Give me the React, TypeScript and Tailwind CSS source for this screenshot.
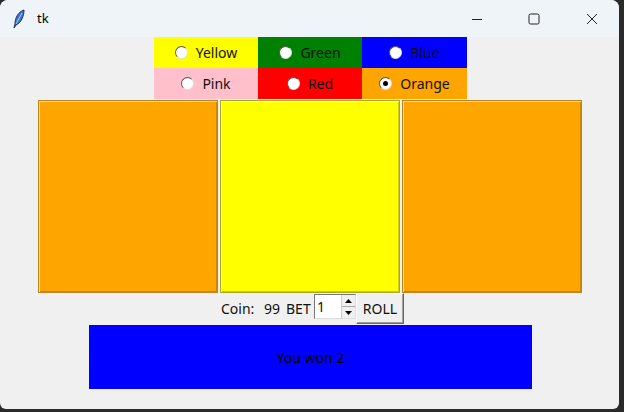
import React, { useState } from "react";

const colours = [
  { name: "Yellow", bg: "bg-[#ffff00]" },
  { name: "Green", bg: "bg-[#008000]" },
  { name: "Blue", bg: "bg-[#0000ff]" },
  { name: "Pink", bg: "bg-[#ffc0cb]" },
  { name: "Red", bg: "bg-[#ff0000]" },
  { name: "Orange", bg: "bg-[#ffa500]" },
];

function Radio({ checked }: { checked: boolean }) {
  return (
    <span className="relative w-[13px] h-[13px] rounded-full bg-white border border-t-[#555] border-l-[#555] border-r-[#ddd] border-b-[#ddd] flex items-center justify-center shrink-0">
      {checked && <span className="w-[5px] h-[5px] rounded-full bg-black" />}
    </span>
  );
}

function TitleBar() {
  return (
    <div className="h-[37px] bg-[#eff4f9] flex items-center shrink-0">
      <svg width="14" height="20" viewBox="0 0 14 20" className="ml-[12px]">
        <path d="M12 1 C6 3 3 9 3 15 L2 19 L4 16 C9 14 12 7 12 1 Z" fill="#3a78d0" stroke="#1a2e55" strokeWidth="1" />
        <path d="M10 4 L4 15" stroke="#a8c8f0" strokeWidth="1" />
      </svg>
      <span className="ml-[11px] text-[13px] text-black">tk</span>
      <div className="ml-auto flex items-center h-full">
        <div className="w-[57px] flex justify-center">
          <svg width="12" height="12" viewBox="0 0 12 12"><path d="M1 6.5 H11" stroke="#222" strokeWidth="1" /></svg>
        </div>
        <div className="w-[57px] flex justify-center">
          <svg width="12" height="12" viewBox="0 0 12 12"><rect x="1" y="1" width="10" height="10" rx="1.5" fill="none" stroke="#222" strokeWidth="1" /></svg>
        </div>
        <div className="w-[57px] flex justify-center pl-[2px]">
          <svg width="12" height="12" viewBox="0 0 12 12"><path d="M1 1 L11 11 M11 1 L1 11" stroke="#222" strokeWidth="1" /></svg>
        </div>
      </div>
    </div>
  );
}

export default function App() {
  const [choice, setChoice] = useState("Orange");
  const [bet, setBet] = useState(1);

  return (
    <div className="w-[624px] h-[412px] bg-[#2a2a2a] overflow-hidden" style={{ fontFamily: '"Noto Sans", "Liberation Sans", sans-serif' }}>
      <div className="w-[619px] h-[409px] bg-[#f0f0f0] rounded-t-[8px] rounded-b-[6px] overflow-hidden flex flex-col text-[14px] text-[#111]">
        <TitleBar />

        {/* colour choices */}
        <div className="ml-[154px] grid grid-cols-[104px_104px_105px]">
          {colours.map((c) => (
            <label
              key={c.name}
              onClick={() => setChoice(c.name)}
              className={`${c.bg} h-[31px] flex items-center justify-center gap-[8px] cursor-pointer`}
            >
              <Radio checked={choice === c.name} />
              <span>{c.name}</span>
            </label>
          ))}
        </div>

        {/* reels */}
        <div className="ml-[38px] mt-[1px] flex gap-[2px]">
          <div className="w-[180px] h-[193px] bg-[#ffa500] border border-[#b8862a] shadow-[inset_1px_1px_0_#ffd48a,inset_-1px_-1px_0_#c98a10]" />
          <div className="w-[180px] h-[193px] bg-[#ffff00] border border-[#a8a830] shadow-[inset_1px_1px_0_#ffffa0,inset_-1px_-1px_0_#d0d000]" />
          <div className="w-[180px] h-[193px] bg-[#ffa500] border border-[#b8862a] shadow-[inset_1px_1px_0_#ffd48a,inset_-1px_-1px_0_#c98a10]" />
        </div>

        {/* controls */}
        <div className="ml-[221px] flex items-start h-[32px]">
          <span className="mt-[5px] w-[43px]">Coin:</span>
          <span className="mt-[5px] w-[22px]">99</span>
          <span className="mt-[5px] w-[28px]">BET</span>
          <div className="mt-[1px] w-[42px] h-[25px] bg-white border border-t-[#777] border-l-[#777] border-r-[#ddd] border-b-[#ddd] flex items-center">
            <span className="ml-[2px] flex-1">{bet}</span>
            <div className="w-[14px] h-full flex flex-col border-l border-[#ccc]">
              <button onClick={() => setBet(bet + 1)} className="flex-1 flex items-center justify-center bg-[#f0f0f0] border-b border-[#aaa]">
                <svg width="7" height="4" viewBox="0 0 7 4"><path d="M0 4 L3.5 0 L7 4 Z" fill="#000" /></svg>
              </button>
              <button onClick={() => setBet(Math.max(1, bet - 1))} className="flex-1 flex items-center justify-center bg-[#f0f0f0]">
                <svg width="7" height="4" viewBox="0 0 7 4"><path d="M0 0 L3.5 4 L7 0 Z" fill="#000" /></svg>
              </button>
            </div>
          </div>
          <button className="w-[48px] h-[31px] bg-[#f0f0f0] border border-t-white border-l-white border-r-[#696969] border-b-[#696969] shadow-[inset_-1px_-1px_0_#a0a0a0] text-[14px]">
            ROLL
          </button>
        </div>

        {/* result */}
        <div className="ml-[89px] w-[443px] h-[64px] bg-[#0000ff] flex items-center justify-center text-[#000]">
          You won 2
        </div>
      </div>
    </div>
  );
}
